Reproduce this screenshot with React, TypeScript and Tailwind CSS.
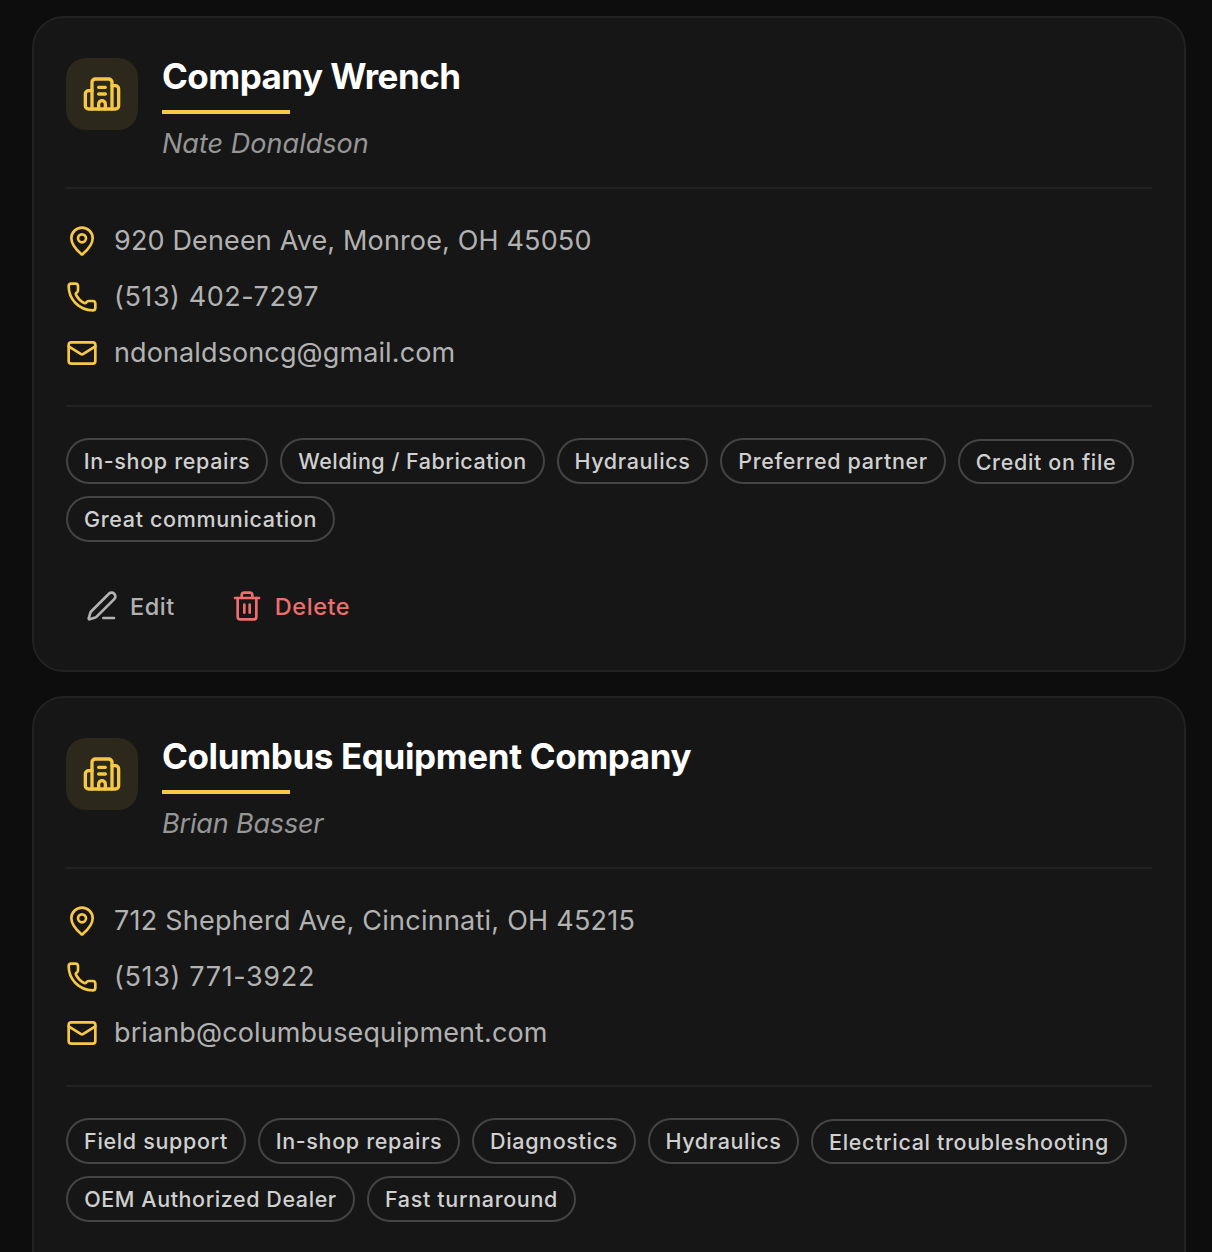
import { Building2, MapPin, Phone, Mail, PenLine, Trash2 } from "lucide-react";

const vendors = [
  {
    name: "Company Wrench",
    nameSpacing: "tracking-[-0.55px]",
    contact: "Nate Donaldson",
    contactSpacing: "tracking-[0.03px]",
    address: "920 Deneen Ave, Monroe, OH 45050",
    addressSpacing: "tracking-[0.15px]",
    phone: "(513) 402-7297",
    phoneSpacing: "tracking-[0.55px]",
    email: "ndonaldsoncg@gmail.com",
    tags: [
      ["In-shop repairs", "w-[202px] h-[46px]"],
      ["Welding / Fabrication", "w-[265px] h-[46px] tracking-[0.5px]"],
      ["Hydraulics", "w-[151px] h-[46px]"],
      ["Preferred partner", "w-[226px] h-[46px]"],
      ["Credit on file", "mt-px w-[176px] h-[45px] pt-0.5"],
      ["Great communication", "w-[269px] h-[46px]"],
    ],
    editable: true,
  },
  {
    name: "Columbus Equipment Company",
    nameSpacing: "tracking-[-0.37px]",
    contact: "Brian Basser",
    contactSpacing: "tracking-[-0.17px]",
    address: "712 Shepherd Ave, Cincinnati, OH 45215",
    addressSpacing: "tracking-[0.24px]",
    phone: "(513) 771-3922",
    phoneSpacing: "tracking-[0.65px]",
    email: "brianb@columbusequipment.com",
    tags: [
      ["Field support", "w-[180px] h-[46px]"],
      ["In-shop repairs", "w-[202px] h-[46px]"],
      ["Diagnostics", "w-[164px] h-[46px]"],
      ["Hydraulics", "w-[151px] h-[46px]"],
      ["Electrical troubleshooting", "mt-px w-[316px] h-[45px] pt-0.5"],
      ["OEM Authorized Dealer", "w-[289px] h-[46px] tracking-[0.57px]"],
      ["Fast turnaround", "w-[209px] h-[46px]"],
    ],
    editable: false,
  },
];

function VendorCard({ vendor }: { vendor: (typeof vendors)[number] }) {
  return (
    <article className="h-[656px] shrink-0 rounded-[32px] border-2 border-[#222222] bg-[#161616] px-8 pt-10">
      <header className="flex h-[131px] gap-6 border-b-2 border-[#222222]">
        <div className="flex size-[72px] shrink-0 items-center justify-center rounded-[20px] bg-[#2c281b]">
          <Building2 className="size-10 text-[#f7c846]" />
        </div>
        <div>
          <h2 className={`h-10 text-[35px] leading-[36px] font-bold text-white ${vendor.nameSpacing}`}>{vendor.name}</h2>
          <div className="mt-3 h-1 w-32 bg-[#f7c846]" />
          <p className={`mt-3 text-[27px] leading-[35px] text-[#969696] italic ${vendor.contactSpacing}`}>{vendor.contact}</p>
        </div>
      </header>
      <div className="flex h-[218px] flex-col gap-4 border-b-2 border-[#222222] pt-8 text-[27px] leading-10 text-[#b2b2b2]">
        <div className="flex items-center gap-4">
          <MapPin className="size-8 text-[#f7c846]" />
          <span className={vendor.addressSpacing}>{vendor.address}</span>
        </div>
        <div className="flex items-center gap-4">
          <Phone className="size-8 text-[#f7c846]" />
          <span className={vendor.phoneSpacing}>{vendor.phone}</span>
        </div>
        <div className="flex items-center gap-4">
          <Mail className="size-8 text-[#f7c846]" />
          <span className="tracking-[0.11px]">{vendor.email}</span>
        </div>
      </div>
      <div className="mt-[31px] flex flex-wrap gap-3 text-[21.5px] font-medium tracking-[0.66px]">
        {vendor.tags.map(([label, shape]) => (
          <span key={label} className={`flex items-center justify-center rounded-full border-2 border-[#444444] whitespace-nowrap text-[#d0d0d0] ${shape}`}>
            {label}
          </span>
        ))}
      </div>
      {vendor.editable && (
        <div className="mt-8 flex h-16 items-center gap-14 pl-5 text-[23.5px] font-medium tracking-[0.55px]">
          <button className="flex items-center gap-3 text-[#b2b2b2]">
            <PenLine className="size-8" />
            <span className="pt-0.5">Edit</span>
          </button>
          <button className="flex items-center gap-3 text-[#ee6e6c]">
            <Trash2 className="size-8" />
            <span className="pt-0.5">Delete</span>
          </button>
        </div>
      )}
    </article>
  );
}

export default function App() {
  return (
    <main className="flex h-[1252px] flex-col gap-6 overflow-hidden bg-[#0d0d0d] pt-4 pr-[26px] pl-8 font-['Inter',sans-serif]">
      {vendors.map((v) => (
        <VendorCard key={v.name} vendor={v} />
      ))}
    </main>
  );
}
